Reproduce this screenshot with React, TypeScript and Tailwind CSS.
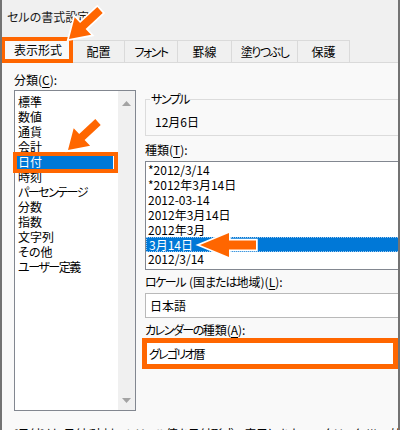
import React from "react";

type P = [number, number];
function arrowPts(tip: P, tail: P, hl: number, hw: number, sw: number): string {
  const dx = tail[0] - tip[0];
  const dy = tail[1] - tip[1];
  const L = Math.hypot(dx, dy);
  const ux = dx / L, uy = dy / L;
  const nx = -uy, ny = ux;
  const bx = tip[0] + ux * hl, by = tip[1] + uy * hl;
  const pts: P[] = [
    tip,
    [bx + nx * hw, by + ny * hw],
    [bx + nx * sw, by + ny * sw],
    [tail[0] + nx * sw, tail[1] + ny * sw],
    [tail[0] - nx * sw, tail[1] - ny * sw],
    [bx - nx * sw, by - ny * sw],
    [bx - nx * hw, by - ny * hw],
  ];
  return pts.map((p) => `${p[0].toFixed(1)},${p[1].toFixed(1)}`).join(" ");
}

const categories: { label: string; k?: boolean }[] = [
  { label: "標準" },
  { label: "数値" },
  { label: "通貨" },
  { label: "会計" },
  { label: "日付" },
  { label: "時刻" },
  { label: "パーセンテージ", k: true },
  { label: "分数" },
  { label: "指数" },
  { label: "文字列" },
  { label: "その他" },
  { label: "ユーザー定義", k: true },
];

const types = [
  "*2012/3/14",
  "*2012年3月14日",
  "2012-03-14",
  "2012年3月14日",
  "2012年3月",
  "3月14日",
  "2012/3/14",
];

const tabs: { label: string; w: string; k?: boolean }[] = [
  { label: "配置", w: "w-[52px]" },
  { label: "フォント", w: "w-[53px]", k: true },
  { label: "罫線", w: "w-[54px]" },
  { label: "塗りつぶし", w: "w-[66px]", k: true },
  { label: "保護", w: "w-[52px]" },
];

export default function App() {
  return (
    <div className="relative w-[400px] h-[430px] overflow-hidden bg-[#f0f0f0] border-x-2 border-[#737373] text-[12px] text-black font-['Noto_Sans_CJK_JP','Noto_Sans',sans-serif] [font-feature-settings:'palt']">
      {/* title */}
      <div className="h-[40px] pl-[5px] pt-[9px] leading-[16px] text-[#1a1a1a]">セルの書式設定</div>

      {/* tabs */}
      <div className="flex h-[22px] items-stretch">
        <div className="ml-[1px] w-[70px] -mt-[2px] bg-[#f9f9f9] flex items-center justify-center leading-[16px]">
          表示形式
        </div>
        {tabs.map((t) => (
          <div
            key={t.label}
            className={`${t.w} border-t border-r border-[#dadada] bg-[#f0f0f0] flex items-center justify-center leading-[16px] ${
              t.k ? "tracking-[-1.5px]" : ""
            }`}
          >
            {t.label}
          </div>
        ))}
      </div>

      {/* panel */}
      <div className="h-full border-t border-[#dadada] bg-[#f9f9f9] pl-[12px] pt-[9px] flex flex-col">
        <div className="flex gap-[9px] items-start">
          {/* left column */}
          <div className="w-[122px] shrink-0 flex flex-col">
            <div className="h-[16px] leading-[16px]">
              分類(<span className="underline underline-offset-2">C</span>):
            </div>
            <div className="mt-[2px] h-[321px] border border-[#828790] bg-white flex">
              <div className="flex-1 pt-[3px] pl-[2px] pr-[5px]">
                {categories.map((c) => (
                  <div
                    key={c.label}
                    className={`h-[15px] leading-[15px] pl-[1px] whitespace-nowrap ${
                      c.label === "日付" ? "bg-[#0078d7] text-white" : ""
                    } ${c.k ? "tracking-[-1.5px]" : ""}`}
                  >
                    {c.label}
                  </div>
                ))}
              </div>
              <div className="w-[17px] bg-[#f0f0f0] flex flex-col items-center justify-between pt-[10px] pb-[7px]">
                <svg width="9" height="5" viewBox="0 0 9 5">
                  <polygon points="4.5,0 9,5 0,5" fill="#a3a3a3" />
                </svg>
                <svg width="9" height="5" viewBox="0 0 9 5">
                  <polygon points="0,0 9,0 4.5,5" fill="#a3a3a3" />
                </svg>
              </div>
            </div>
          </div>

          {/* right column */}
          <div className="w-[280px] shrink-0 flex flex-col">
            <fieldset className="mt-[19px] border border-[#dcdcdc]">
              <legend className="ml-[4px] px-[1px] leading-[16px] tracking-[-1.5px]">サンプル</legend>
              <div className="pl-[9px] pt-[7px] pb-[5px] leading-[16px]">12月6日</div>
            </fieldset>

            <div className="mt-[6px] h-[16px] leading-[16px]">
              種類(<span className="underline underline-offset-2">T</span>):
            </div>
            <div className="mt-[3px] h-[109px] border border-[#828790] bg-white pt-[1px]">
              {types.map((t, i) => (
                <div
                  key={i}
                  className={`h-[14.9px] leading-[14.9px] pl-[2px] whitespace-nowrap ${
                    i === 5
                      ? "bg-[#0078d7] text-white border border-dotted border-[#9cc8ee] pl-[1px] leading-[12.9px]"
                      : ""
                  }`}
                >
                  {t}
                </div>
              ))}
            </div>

            <div className="mt-[4px] h-[16px] leading-[16px] whitespace-nowrap">
              <span className="tracking-[-1.5px] mr-[4px]">ロケール</span>(国<span className="tracking-[-1px]">または</span>地域)(<span className="underline underline-offset-2">L</span>):
            </div>
            <div className="mt-[3px] h-[25px] border border-[#b9b9b9] bg-white pl-[4px] flex items-center">
              日本語
            </div>

            <div className="mt-[4px] h-[16px] leading-[16px] whitespace-nowrap">
              <span className="tracking-[-1.5px]">カレンダーの</span>種類(<span className="underline underline-offset-2">A</span>):
            </div>
            <div className="mt-[3px] h-[25px] border border-[#b9b9b9] bg-white pl-[3px] flex items-center">
              <span className="tracking-[-1.8px]">グレゴリオ</span>暦
            </div>
          </div>
        </div>

        <p className="mt-[15px] leading-[16px] whitespace-nowrap tracking-[-0.5px]">
          [日付] は、日付/時刻のシリアル値を日付形式で表示します。アスタリスク (*) で始まる日付形式は、オペレーティング システムで指定される地域の日付と時刻の設定の変更に対応します。
        </p>
      </div>

      {/* annotation boxes */}
      <div className="absolute left-[-1px] top-[37px] w-[72px] h-[26px] border-[4px] border-[#ff6600] pointer-events-none" />
      <div className="absolute left-[11px] top-[152px] w-[105px] h-[21px] border-[4px] border-[#ff6600] pointer-events-none" />
      <div className="absolute left-[140px] top-[338px] w-[256px] h-[31px] border-[5px] border-[#ff6600] pointer-events-none" />

      {/* annotation arrows */}
      <svg
        className="absolute left-[-2px] top-0 pointer-events-none"
        width="400"
        height="430"
        viewBox="0 0 400 430"
      >
        <g fill="#ff6600" stroke="#ffffff" strokeWidth="3.5" strokeLinejoin="miter" paintOrder="stroke">
          <polygon points={arrowPts([69, 39], [100, 10], 19, 12, 4)} />
          <polygon points={arrowPts([68, 150], [98, 122], 19, 12, 4)} />
          <polygon points={arrowPts([200, 245], [256, 245], 29, 12, 4.5)} />
        </g>
      </svg>
    </div>
  );
}
